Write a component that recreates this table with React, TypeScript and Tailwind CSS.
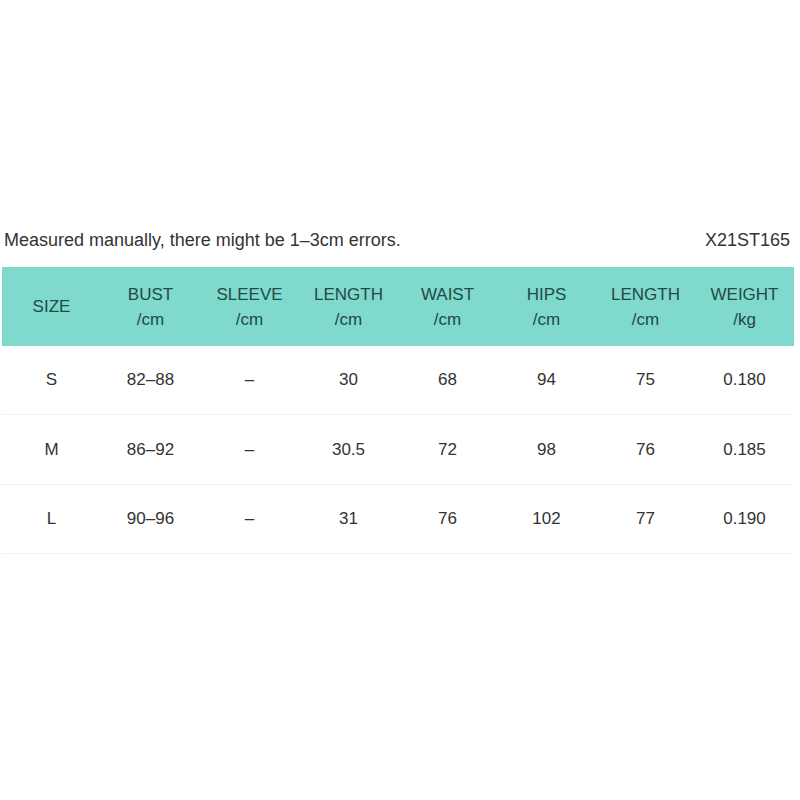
const headers = [
  ["SIZE"],
  ["BUST", "/cm"],
  ["SLEEVE", "/cm"],
  ["LENGTH", "/cm"],
  ["WAIST", "/cm"],
  ["HIPS", "/cm"],
  ["LENGTH", "/cm"],
  ["WEIGHT", "/kg"],
];

const rows = [
  { h: "h-[69px]", cells: ["S", "82–88", "–", "30", "68", "94", "75", "0.180"] },
  { h: "h-[70px]", cells: ["M", "86–92", "–", "30.5", "72", "98", "76", "0.185"] },
  { h: "h-[69px]", cells: ["L", "90–96", "–", "31", "76", "102", "77", "0.190"] },
];

export default function App() {
  return (
    <div className="w-[800px] h-[800px] bg-white font-['Liberation_Sans',Arial,sans-serif] text-[#333] pt-[227px]">
      <div className="flex justify-between items-center pl-[4px] pr-[10px] h-[26px] text-[18px] text-[#333]">
        <span>Measured manually, there might be 1–3cm errors.</span>
        <span>X21ST165</span>
      </div>

      <div className="ml-[2px] w-[792px] mt-[14px]">
        {/* header */}
        <div className="grid grid-cols-8 h-[79px] bg-[#7fd9cc] text-[#234a44] text-[17px] leading-[25px]">
          {headers.map((h, i) => (
            <div key={i} className="flex flex-col items-center justify-center">
              {h.map((t, j) => (
                <span key={j}>{t}</span>
              ))}
            </div>
          ))}
        </div>

        {/* body */}
        {rows.map((r, i) => (
          <div key={i} className={`grid grid-cols-8 ${r.h} border-b border-[#f0f0f0] text-[17px] text-[#333]`}>
            {r.cells.map((c, j) => (
              <div key={j} className="flex items-center justify-center">
                {c}
              </div>
            ))}
          </div>
        ))}
      </div>
    </div>
  );
}
